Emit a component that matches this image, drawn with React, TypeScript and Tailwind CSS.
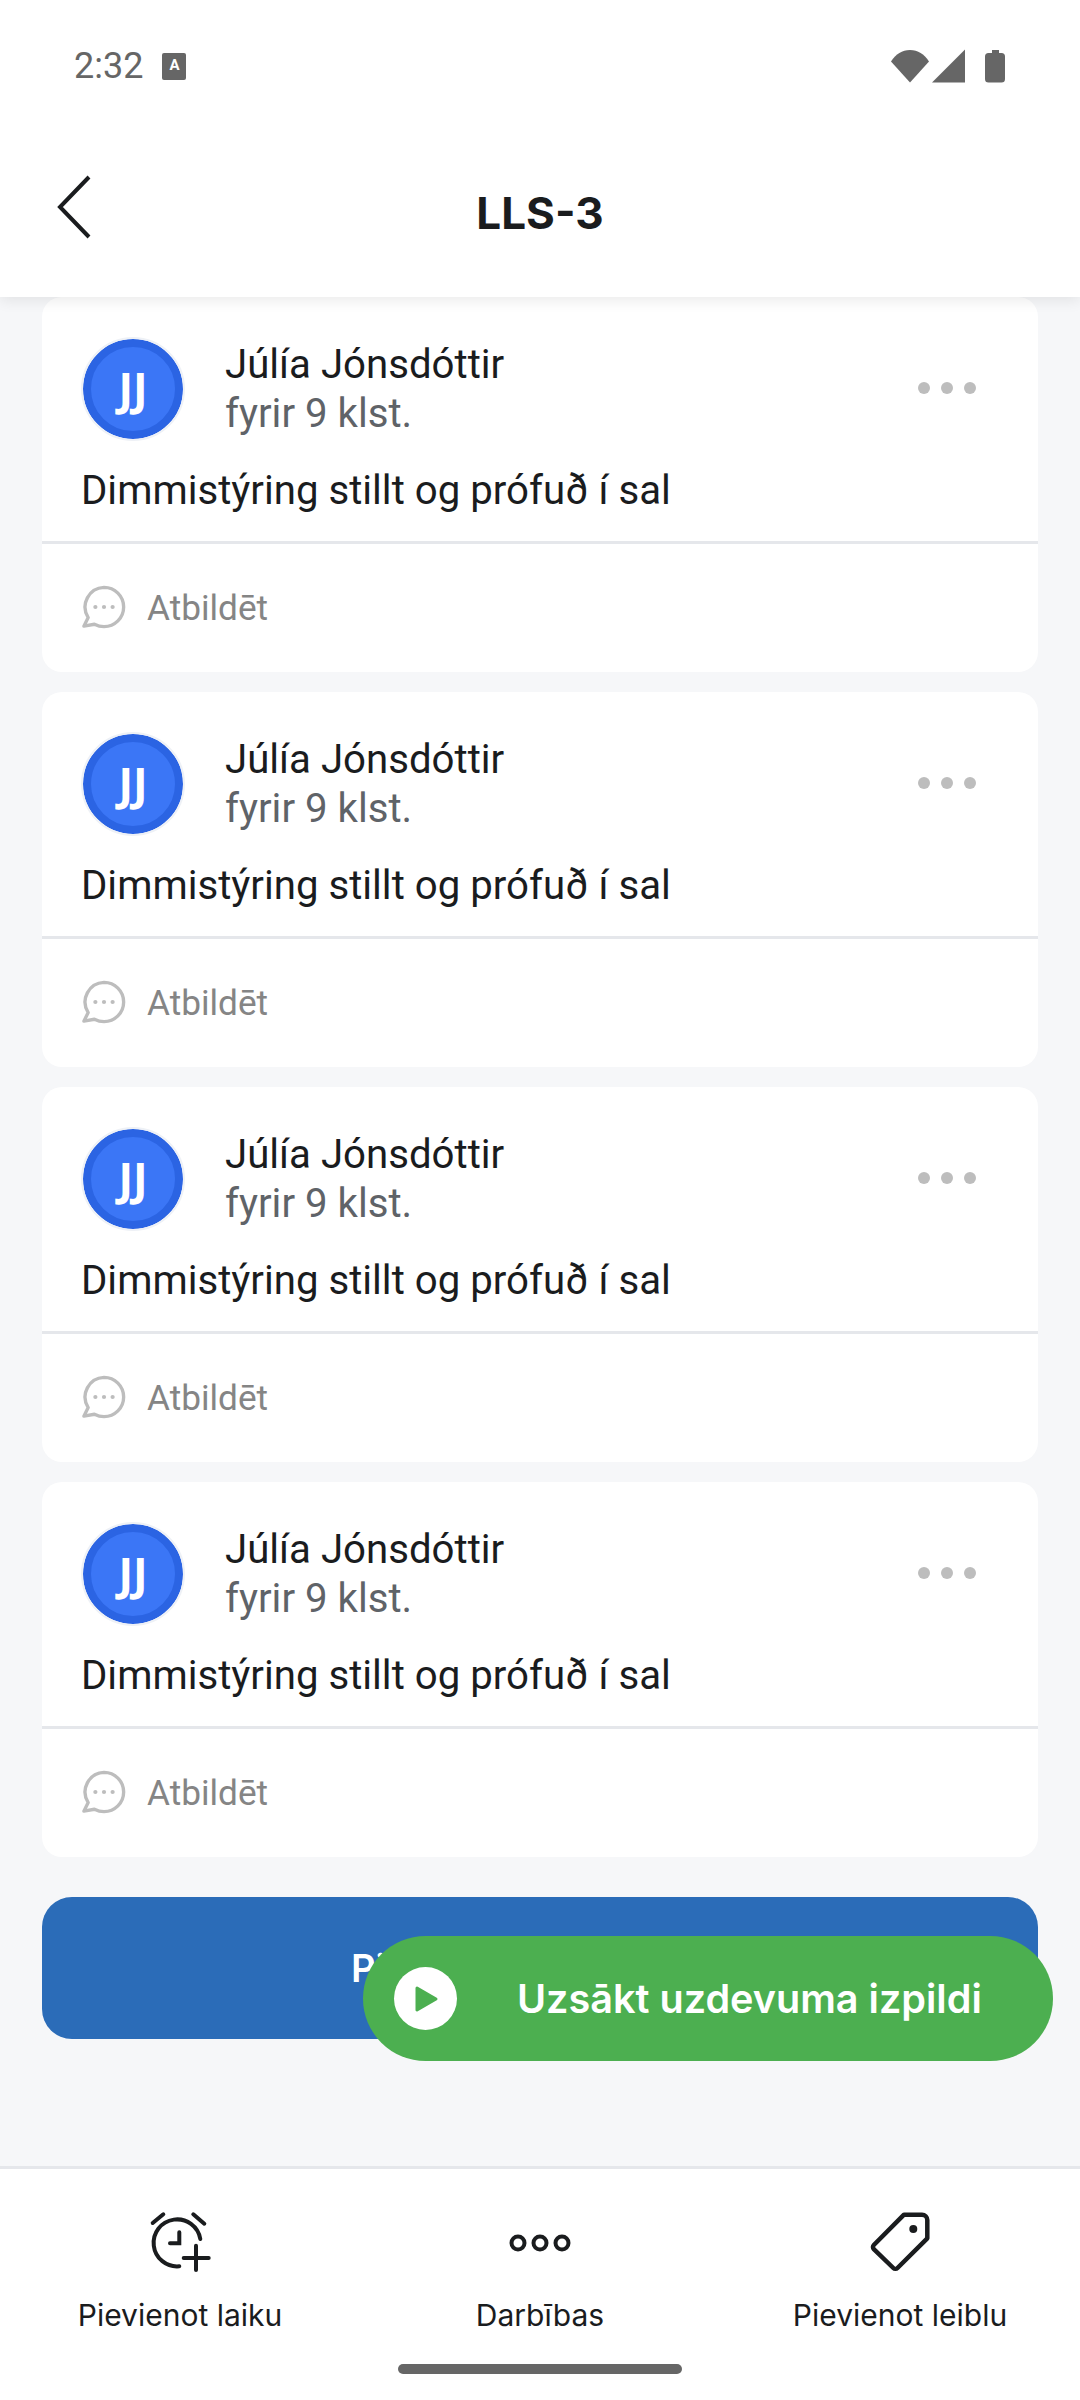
const comments = [1, 2, 3, 4]

function CommentCard() {
  return (
    <div className="bg-white rounded-[20px] h-[375px] flex flex-col">
      {/* Author row */}
      <div className="flex items-center pl-[41px] pr-[62px] pt-[42px]">
        <div className="w-[100px] h-[100px] rounded-full bg-[#3b76f6] border-[8px] border-[#2b64e3] outline-2 outline-[#eef1f6] flex items-center justify-center shrink-0">
          <span className="font-['Noto_Sans',sans-serif] text-white font-bold text-[44px] leading-none pb-[2px]">JJ</span>
        </div>
        <div className="ml-[42px] flex-1">
          <div className="text-[40.200px] leading-[49px] text-[#1a1c1e]">Júlía Jónsdóttir</div>
          <div className="text-[40.200px] leading-[49px] text-[#5f6368]">fyrir 9 klst.</div>
        </div>
        <div className="flex gap-[11px] mb-[2px]">
          <span className="w-[12px] h-[12px] rounded-full bg-[#bdbdbd]" />
          <span className="w-[12px] h-[12px] rounded-full bg-[#bdbdbd]" />
          <span className="w-[12px] h-[12px] rounded-full bg-[#bdbdbd]" />
        </div>
      </div>
      <div className="pl-[39px] mt-[27px] text-[40.200px] leading-[50px] text-[#1a1c1e]">
        Dimmistýring stillt og prófuð í sal
      </div>
      <div className="h-[3px] bg-[#e5e7eb] mt-[25px]" />
      {/* Reply row */}
      <div className="flex-1 flex items-center pl-[39px] pb-[2px]">
        <svg width="46" height="46" viewBox="0 0 48 48" fill="none" stroke="#bdbdbd" strokeWidth="3.5" strokeLinejoin="round">
          <path d="M24 3.500a20.500 20.500 0 1 1 0 41c-4 0-7-1-10-2.500L3 44l4.500-9A20.500 20.500 0 0 1 24 3.500z" />
          <circle cx="15" cy="24" r="2.200" fill="#bdbdbd" stroke="none" />
          <circle cx="24" cy="24" r="2.200" fill="#bdbdbd" stroke="none" />
          <circle cx="33" cy="24" r="2.200" fill="#bdbdbd" stroke="none" />
        </svg>
        <span className="ml-[20px] mt-[2px] text-[35.200px] text-[#858585]">Atbildēt</span>
      </div>
    </div>
  )
}

export default function App() {
  return (
    <div className="relative w-[1080px] h-[2400px] overflow-hidden flex flex-col bg-[#f6f7f9] font-['Roboto',sans-serif]">
      {/* Status bar + header */}
      <header className="relative z-10 h-[297px] shrink-0 bg-white shadow-[0_3px_14px_rgba(0,0,0,0.09)]">
        <div className="flex items-center justify-between pl-[74px] pr-[74px] pt-[44px]">
          <div className="flex items-center gap-[19px]">
            <span className="text-[36px] leading-[44px] text-[#666666]">2:32</span>
            <span className="w-[24px] h-[27px] rounded-[2px] bg-[#666666] text-white text-[15px] font-bold leading-[24px] text-center">A</span>
          </div>
          <svg width="116" height="34" viewBox="0 0 116 34" fill="#666666">
            <path d="M1 12.500C6 5 12 1 20 1s14 4 19 11.500L20 33.500z" />
            <path d="M42 33.500 75 0.500V33.500z" />
            <path d="M102 1h7v3h2.500a3.500 3.500 0 0 1 3.500 3.500v22.500a3.500 3.500 0 0 1-3.500 3.500h-13a3.500 3.500 0 0 1-3.500-3.500V7.500a3.500 3.500 0 0 1 3.500-3.500h3.500z" />
          </svg>
        </div>
        <div className="relative flex items-center justify-center h-[80px] mt-[85px]">
          <svg className="absolute left-[56px] top-[2px]" width="36" height="64" viewBox="0 0 36 64" fill="none" stroke="#1a1c1e" strokeWidth="4">
            <path d="M33 2 4 32 33 62" />
          </svg>
          <h1 className="font-['Inter',sans-serif] text-[44px] font-bold text-[#1a1c1e]">LLS-3</h1>
        </div>
      </header>

      {/* Scrolling comments */}
      <main className="flex-1 flex flex-col gap-[20px] px-[42px]">
        {comments.map(id => (
          <CommentCard key={id} />
        ))}
        <button className="mt-[20px] h-[142px] rounded-[30px] bg-[#2b6cb8] text-white text-[38px] font-semibold font-['Inter',sans-serif]">
          Pievienot komentāru
        </button>
      </main>

      {/* Floating action */}
      <div className="absolute left-[363px] top-[1936px] w-[690px] h-[125px] rounded-full bg-[#4caf50] flex items-center pl-[31px] text-white font-['Inter',sans-serif]">
        <span className="w-[63px] h-[63px] rounded-full bg-white flex items-center justify-center">
          <svg width="28" height="32" viewBox="0 0 28 32" fill="#4caf50" stroke="#4caf50" strokeWidth="3" strokeLinejoin="round">
            <path d="M5 5 24 16 5 27z" />
          </svg>
        </span>
        <span className="ml-[60px] pt-[2px] text-[39.600px] font-semibold">Uzsākt uzdevuma izpildi</span>
      </div>

      {/* Bottom actions */}
      <footer className="relative h-[234px] shrink-0 bg-white border-t-[3px] border-[#e5e7eb] grid grid-cols-3 pt-[33px] font-['Inter',sans-serif]">
        <div className="flex flex-col items-center">
          <svg width="80" height="80" viewBox="0 0 80 80" fill="none" stroke="#1a1c1e" strokeWidth="4" strokeLinecap="round">
            <path d="M12.700 21 23.300 12.300M53.300 12.300 64.300 21.700" />
            <path d="M39.300 64.300A23.500 23.500 0 1 1 60.300 37" />
            <path d="M39.300 30.300V41.300H30" />
            <path d="M43.700 56H68.700M56 43.700V68" />
          </svg>
          <span className="mt-[11px] text-[30px] text-[#1a1c1e]">Pievienot laiku</span>
        </div>
        <div className="flex flex-col items-center">
          <svg width="80" height="80" viewBox="0 0 80 80" fill="none" stroke="#1a1c1e" strokeWidth="4">
            <circle cx="18" cy="41" r="6.500" />
            <circle cx="40" cy="41" r="6.500" />
            <circle cx="62" cy="41" r="6.500" />
          </svg>
          <span className="mt-[11px] text-[30px] text-[#1a1c1e]">Darbības</span>
        </div>
        <div className="flex flex-col items-center">
          <svg width="80" height="80" viewBox="0 0 80 80" fill="none" stroke="#1a1c1e" strokeWidth="4.500" strokeLinejoin="round">
            <path d="M44 12.700H62a5.300 5.300 0 0 1 5.300 5.300V36.300L37.500 66a3 3 0 0 1-4.200 0L13.800 47.200a3 3 0 0 1 0-4.200z" />
            <circle cx="53.300" cy="27" r="4" fill="#1a1c1e" stroke="none" />
          </svg>
          <span className="mt-[11px] text-[30px] text-[#1a1c1e]">Pievienot leiblu</span>
        </div>
        <div className="absolute left-[398px] top-[195px] w-[284px] h-[10px] rounded-full bg-[#666666]" />
      </footer>
    </div>
  )
}
